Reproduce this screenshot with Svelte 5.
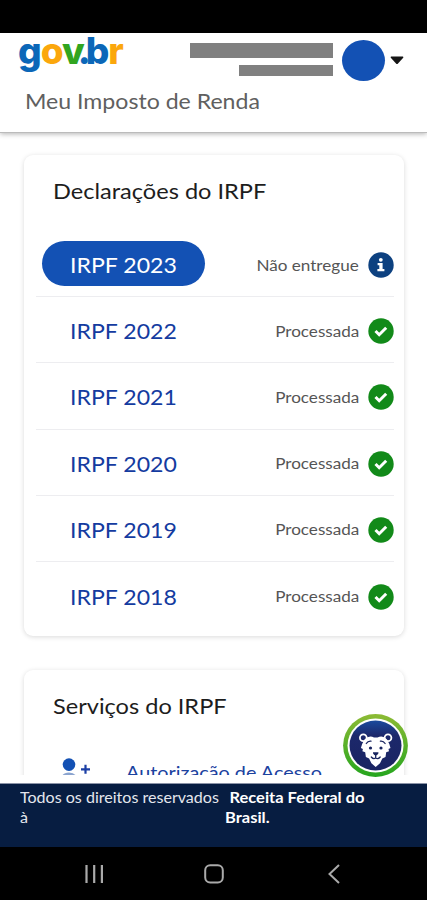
<script>
  const declarations = [
    { year: 2023, status: "Não entregue", done: false },
    { year: 2022, status: "Processada", done: true },
    { year: 2021, status: "Processada", done: true },
    { year: 2020, status: "Processada", done: true },
    { year: 2019, status: "Processada", done: true },
    { year: 2018, status: "Processada", done: true },
  ];

  let selected = $state(2023);
</script>

<div class="phone">
  <div class="status-bar"></div>

  <header>
    <div class="brand-row">
      <div class="logo"><span class="blue">g</span><span class="yellow">o</span><span class="green">v</span><span class="blue dot">.</span><span class="blue">b</span><span class="yellow">r</span></div>
      <div class="user">
        <div class="user-lines">
          <div class="line"></div>
          <div class="line short"></div>
        </div>
        <div class="avatar"></div>
        <svg class="caret" width="14" height="9" viewBox="0 0 14 9">
          <path d="M1.2 0.5h11.6q1 0.2 0.4 1.2L8 7.5q-1 1-2 0L0.8 1.7q-0.6-1 0.4-1.2z" fill="#151515" />
        </svg>
      </div>
    </div>
    <h1><span class="wide">Meu Imposto de Renda</span></h1>
  </header>

  <main>
    <section class="card declarations">
      <h2><span class="wide">Declarações do IRPF</span></h2>
      <ul>
        {#each declarations as item}
          <li>
            <button class:active={item.year === selected} onclick={() => (selected = item.year)}>
              <span class="wide">IRPF {item.year}</span>
            </button>
            <div class="status">
              <span class="wide">{item.status}</span>
              {#if item.done}
                <svg width="26" height="26" viewBox="0 0 26 26">
                  <circle cx="13" cy="13" r="12.7" fill="#128a19" />
                  <path d="M7.5 13l3.7 3.7 7-7" fill="none" stroke="#fff" stroke-width="3" />
                </svg>
              {:else}
                <svg width="26" height="26" viewBox="0 0 26 26">
                  <circle cx="13" cy="13" r="12.7" fill="#0d4180" />
                  <circle cx="12.8" cy="7.8" r="1.9" fill="#fff" />
                  <path d="M9.6 11h5v6h1.8v2.3H9.4V17h1.9v-3.7H9.6z" fill="#fff" />
                </svg>
              {/if}
            </div>
          </li>
        {/each}
      </ul>
    </section>

    <section class="card services">
      <h2><span class="wide">Serviços do IRPF</span></h2>
      <div class="service">
        <svg width="30" height="28" viewBox="0 0 30 28">
          <circle cx="8" cy="6.6" r="6.3" fill="#1351b4" />
          <path d="M0 22.500q0-8 8-8t8 8v3H0z" fill="#8ba4cf" />
          <path d="M24.500 6.800v9M20 11.300h9" stroke="#1b3fa5" stroke-width="2.200" />
        </svg>
        <span class="wide">Autorização de Acesso</span>
      </div>
    </section>
  </main>

  <button class="assistant" aria-label="Assistente">
    <svg width="66" height="64" viewBox="0 0 66 64">
      <defs>
        <linearGradient id="ring" x1="0" y1="0" x2="0" y2="1">
          <stop offset="0" stop-color="#8dbb35" />
          <stop offset="1" stop-color="#25a51e" />
        </linearGradient>
        <linearGradient id="disc" x1="0" y1="0" x2="0" y2="1">
          <stop offset="0" stop-color="#1b4a9d" />
          <stop offset="0.3" stop-color="#1c286b" />
          <stop offset="1" stop-color="#1a2462" />
        </linearGradient>
      </defs>
      <ellipse cx="32.5" cy="31.5" rx="32.400" ry="31.400" fill="url(#ring)" />
      <ellipse cx="32.5" cy="31.5" rx="28" ry="27" fill="#fff" />
      <ellipse cx="32.5" cy="31.5" rx="26" ry="25" fill="url(#disc)" />
      <g fill="#1c286b" stroke="#fff" stroke-width="1.800">
        <circle cx="20.300" cy="23.800" r="3.400" />
        <circle cx="45" cy="23.800" r="3.400" />
      </g>
      <path d="M21.500 25.500Q26 21 31 23.500h3.500Q40 21 44 25.500q2.500 4 3.500 8.500l-2 1 .5 2.200-2.800 1-.7 4.800-3.200 1.500-2.300 4.700-4.300 3.800-4.300-3.800-2.300-4.700-3.200-1.500-.7-4.800-2.800-1 .5-2.200-2-1Q19 29.500 21.500 25.500z" fill="#fff" />
      <g fill="none" stroke="#17235e" stroke-width="1.300" stroke-linecap="round">
        <path d="M23.300 29.500Q25 26.800 28 27.200M37.400 27.200Q40.400 26.800 42.100 29.500" />
        <path d="M32.700 41v3M28.300 43Q30.500 45.700 32.700 44 35 45.700 37.200 43" />
      </g>
      <g fill="#17235e">
        <circle cx="27.500" cy="34" r="1.600" />
        <circle cx="38" cy="34" r="1.600" />
        <path d="M30 38.200h5.400q.5 2-2.700 3.400-3.200-1.400-2.700-3.400z" />
      </g>
    </svg>
  </button>

  <footer>
    <div class="rights"><span class="wide">Todos os direitos reservados<br />à</span></div>
    <div class="owner"><span class="wide"><span class="indent">Receita Federal do</span><br />Brasil.</span></div>
  </footer>

  <nav>
    <svg width="20" height="20" viewBox="0 0 20 20">
      <path d="M2.500 1v18M10.200 1v18M17.900 1v18" stroke="#aaa" stroke-width="2.200" />
    </svg>
    <svg width="20" height="20" viewBox="0 0 20 20">
      <rect x="1.200" y="1.200" width="17.600" height="17.200" rx="5" fill="none" stroke="#aaa" stroke-width="2" />
    </svg>
    <svg width="20" height="20" viewBox="0 0 20 20">
      <path d="M15 1L5.500 10l9.500 9" fill="none" stroke="#aaa" stroke-width="2" />
    </svg>
  </nav>
</div>

<style>
  :global(body) {
    margin: 0;
    background: #000;
  }

  .phone {
    position: relative;
    width: 427px;
    height: 900px;
    display: flex;
    flex-direction: column;
    overflow: hidden;
    background: #fff;
    font-family: Lato, sans-serif;
  }

  /* Lato stretched a little to get the broad letterforms of the brand face */
  .wide {
    display: inline-block;
    transform: scaleX(1.1);
    transform-origin: left center;
  }

  .status-bar {
    height: 33px;
    background: #000;
  }

  header {
    box-sizing: border-box;
    height: 100px;
    z-index: 1;
    background: #fff;
    border-bottom: 1px solid #bbb;
    box-shadow: 0 1px 5px rgba(0, 0, 0, 0.3);
  }

  .brand-row {
    display: flex;
    justify-content: space-between;
    height: 52px;
    padding: 0 23px 0 18px;
  }

  .logo {
    font-family: Inter, sans-serif;
    font-size: 37px;
    font-weight: 800;
    line-height: 35px;
    letter-spacing: -1px;
    white-space: nowrap;
  }

  .logo .dot {
    margin: 0 -4px 0 -6px;
  }

  .blue {
    color: #0b67b8;
  }

  .yellow {
    color: #fba70c;
  }

  .green {
    color: #31a520;
  }

  .user {
    display: flex;
    align-items: center;
    height: 54px;
  }

  .user-lines {
    display: flex;
    flex-direction: column;
    align-items: flex-end;
    gap: 7px;
    margin: -2px 9px 0 0;
  }

  .line {
    width: 143px;
    height: 15px;
    background: #808080;
  }

  .line.short {
    width: 94px;
    height: 11px;
  }

  .avatar {
    width: 43px;
    height: 41px;
    margin-right: 5px;
    border-radius: 50%;
    background: #1351b4;
  }

  h1,
  h2 {
    margin: 0;
    font-weight: 400;
    white-space: nowrap;
  }

  h1 {
    padding-left: 25px;
    color: #606060;
    font-size: 21px;
    line-height: 32px;
  }

  main {
    box-sizing: border-box;
    height: 642px;
    display: flex;
    flex-direction: column;
    gap: 34px;
    padding: 22px 23px 0 24px;
    overflow: hidden;
  }

  .card {
    box-sizing: border-box;
    flex: none;
    border-radius: 9px;
    background: #fff;
    box-shadow: 0 1px 5px rgba(0, 0, 0, 0.15);
  }

  .declarations {
    height: 481px;
  }

  .services {
    height: 200px;
  }

  h2 {
    height: 76px;
    padding-left: 29px;
    color: #1d1d1d;
    font-size: 21px;
    line-height: 71px;
  }

  h2 .wide {
    transform: scaleX(1.122);
  }

  ul {
    margin: 0;
    padding: 0 10px 0 12px;
    list-style: none;
  }

  li {
    box-sizing: border-box;
    height: 66.2px;
    display: flex;
    align-items: center;
    justify-content: space-between;
    padding: 3px 0 0 6px;
    border-bottom: 1px solid #ededf0;
  }

  li:last-child {
    border-bottom: none;
  }

  button {
    padding: 0;
    border: none;
    background: none;
    font-family: inherit;
    cursor: pointer;
  }

  li button {
    width: 163px;
    height: 45px;
    margin-top: -3px;
    padding: 2px 0 0 28px;
    border-radius: 23px;
    color: #143ba0;
    font-size: 21px;
    text-align: left;
    white-space: nowrap;
  }

  li button.active {
    background: #1351b4;
    color: #fff;
  }

  .status {
    display: flex;
    align-items: center;
    gap: 9px;
    color: #555;
    font-size: 14.5px;
    white-space: nowrap;
  }

  .status .wide {
    transform: scaleX(1.18);
    transform-origin: right center;
  }

  .service {
    display: flex;
    gap: 35px;
    padding: 12px 0 0 37px;
    color: #1b429f;
    font-size: 18px;
    line-height: 28px;
    white-space: nowrap;
  }

  .assistant {
    position: absolute;
    left: 343px;
    top: 714px;
    width: 66px;
    height: 64px;
  }

  footer {
    box-sizing: border-box;
    height: 64px;
    display: flex;
    margin-top: 8px;
    padding: 3px 20px;
    border-top: 1px solid #8b93a7;
    background: #071d41;
    color: #e4e7ed;
    font-size: 15px;
    line-height: 20px;
    white-space: nowrap;
  }

  .rights {
    width: 205px;
  }

  .rights .wide {
    transform: scaleX(1.07);
  }

  .owner {
    color: #fff;
    font-weight: 700;
  }

  .owner .indent {
    padding-left: 4px;
  }

  nav {
    flex: 1;
    display: flex;
    justify-content: space-between;
    align-items: center;
    padding: 0 83px 0 84px;
    background: #000;
  }
</style>
